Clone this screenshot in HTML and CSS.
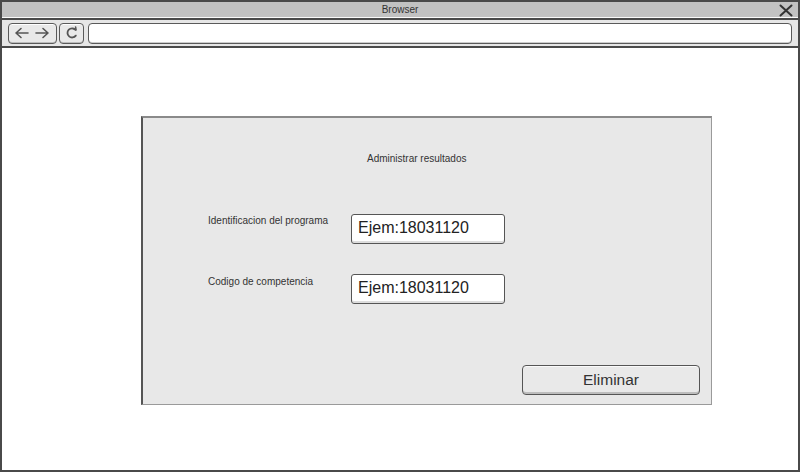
FILE: index.html
```html
<!DOCTYPE html>
<html lang="es">
<head>
<meta charset="utf-8">
<title>Browser</title>
<link rel="stylesheet" href="styles.css">
</head>
<body>
<div class="window">
  <div class="titlebar">
    <span class="title">Browser</span>
    <svg class="close" width="14" height="13" viewBox="0 0 14 13"><path d="M1.5 1.5 L12.5 11.5 M12.5 1.5 L1.5 11.5" stroke="#333" stroke-width="2" fill="none" stroke-linecap="round"/></svg>
  </div>
  <div class="toolbar">
    <div class="tbtn nav">
      <svg width="40" height="14" viewBox="0 0 40 14"><path d="M3 7 H15 M3 7 L8 2.5 M3 7 L8 11.5 M23 7 H35 M35 7 L30 2.5 M35 7 L30 11.5" stroke="#555" stroke-width="1.6" fill="none" stroke-linecap="round" stroke-linejoin="round"/></svg>
    </div>
    <div class="tbtn reload">
      <svg width="14" height="14" viewBox="0 0 14 14"><path d="M10.5 3.8 A4.6 4.6 0 1 0 10.8 9.6" stroke="#555" stroke-width="1.8" fill="none" stroke-linecap="round"/><path d="M8 2.6 L11 3.8 L10.6 1" stroke="#555" stroke-width="1.6" fill="none" stroke-linecap="round" stroke-linejoin="round"/></svg>
    </div>
    <div class="url"></div>
  </div>
  <div class="content">
    <div class="panel">
      <div class="heading">Administrar resultados</div>
      <div class="form">
        <div class="label first">Identificacion del programa</div>
        <div class="input">Ejem:18031120</div>
        <div class="label second">Codigo de competencia</div>
        <div class="input">Ejem:18031120</div>
      </div>
      <div class="actions">
        <div class="button">Eliminar</div>
      </div>
    </div>
  </div>
</div>
</body>
</html>
```
FILE: styles.css
```css
* { box-sizing: border-box; }
html, body { margin: 0; padding: 0; background: #fff; }
body { font-family: "Liberation Sans", Arial, sans-serif; color: #333; }

.window {
  width: 800px;
  height: 472px;
  border: 2px solid #4a4a4a;
  display: flex;
  flex-direction: column;
  background: #fff;
}

.titlebar {
  height: 16px;
  background: #c2c2c2;
  border-bottom: 1px solid #fafafa;
  display: flex;
  align-items: center;
  justify-content: center;
  position: relative;
}
.title { font-size: 10px; color: #333; line-height: 1; margin-top: 1px; }
.close { position: absolute; right: 5px; top: 2px; }

.toolbar {
  height: 30px;
  background: #e6e6e6;
  border-top: 2px solid #4a4a4a;
  border-bottom: 2px solid #4a4a4a;
  display: flex;
  align-items: center;
  padding: 0 6px 0 6px;
  gap: 2px;
}
.tbtn, .url {
  height: 21px;
  border: 1.5px solid #5a5a5a;
  border-radius: 4px;
  box-shadow: inset 0 -1px 0 #bbb, inset 0 1px 0 #fff;
  display: flex;
  align-items: center;
  justify-content: center;
}
.tbtn { background: #e9e9e9; }
.nav { width: 49px; }
.reload { width: 25px; }
.url { flex: 1; background: #fff; margin-left: 2px; box-shadow: inset 0 -1px 0 #ccc; }

.content {
  flex: 1;
  padding: 68px 0 0 139px;
}

.panel {
  width: 571px;
  height: 289px;
  background: #e8e8e8;
  border-top: 2px solid #8a8a8a;
  border-left: 2px solid #555;
  border-right: 1.5px solid #9a9a9a;
  border-bottom: 1.5px solid #9a9a9a;
  display: flex;
  flex-direction: column;
}

.heading {
  font-size: 10px;
  line-height: 12px;
  margin-top: 35px;
  padding-left: 224px;
  color: #333;
}

.form {
  margin-top: 49px;
  padding-left: 65px;
  display: grid;
  grid-template-columns: 143px 154px;
  grid-auto-rows: 30px;
  row-gap: 30px;
}
.label { font-size: 10px; line-height: 12px; color: #333; padding-top: 1px; }
.label.second { padding-top: 2px; }

.input {
  height: 30px;
  background: #fff;
  border: 1.5px solid #555;
  border-radius: 3px;
  box-shadow: inset 0 -2px 0 #ddd;
  font-size: 16px;
  line-height: 26px;
  padding-left: 6px;
  color: #222;
}

.actions {
  margin-top: auto;
  display: flex;
  justify-content: flex-end;
  padding: 0 11px 9px 0;
}
.button {
  width: 178px;
  height: 30px;
  border: 1.5px solid #555;
  border-radius: 4px;
  background: #e9e9e9;
  box-shadow: inset 0 -2px 0 #bdbdbd, inset 0 1px 0 #fafafa;
  font-size: 15.5px;
  line-height: 27px;
  text-align: center;
  color: #333;
}
```
